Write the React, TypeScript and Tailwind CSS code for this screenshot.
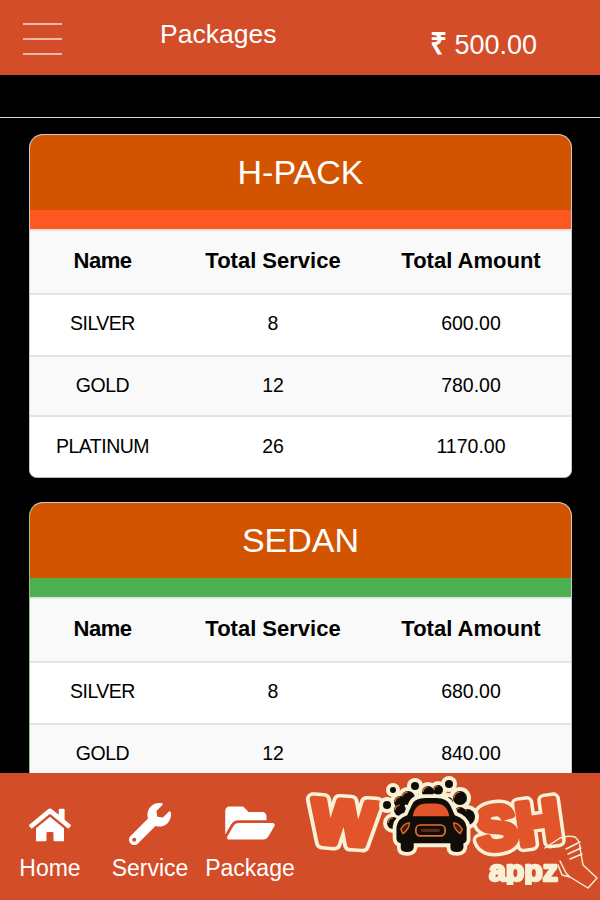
import { FaHome, FaWrench, FaFolderOpen } from "react-icons/fa";

const packs = [
  {
    title: "H-PACK",
    stripe: "bg-[#ff5722]",
    edge: "border-l-[#c9c9c9]",
    rows: [
      ["SILVER", "8", "600.00"],
      ["GOLD", "12", "780.00"],
      ["PLATINUM", "26", "1170.00"],
    ],
  },
  {
    title: "SEDAN",
    stripe: "bg-[#4caf50]",
    edge: "border-l-[#8fbf7f]",
    rows: [
      ["SILVER", "8", "680.00"],
      ["GOLD", "12", "840.00"],
    ],
  },
];

// row heights differ by a pixel or two in the picture
const rowHeights = ["h-[62px] pb-[2px]", "h-[60px] pb-[1px]", "h-[62px]"];

function Row({ cells, className }: { cells: string[]; className: string }) {
  return (
    <div className={`grid grid-cols-[145px_196px_1fr] items-center border-t-2 border-[#e3e3e3] text-center ${className}`}>
      {cells.map((c, i) => (
        <div key={c} className={i === 0 ? "tracking-[-0.5px]" : ""}>
          {c}
        </div>
      ))}
    </div>
  );
}

function PackCard({ pack }: { pack: (typeof packs)[number] }) {
  return (
    <section className={`mb-[24px] overflow-hidden rounded-t-[14px] rounded-b-[8px] border border-[#c9c9c9] border-b-[#b5b5b5] bg-white text-black ${pack.edge}`}>
      <h2 className="flex h-[75px] items-center justify-center bg-[#d35400] pb-[1px] text-[34px] text-white">
        {pack.title}
      </h2>
      <div className={`h-[19px] ${pack.stripe}`} />
      <Row cells={["Name", "Total Service", "Total Amount"]} className="h-[64px] bg-[#f9f9f9] pb-[4px] text-[22px] font-bold" />
      {pack.rows.map((r, i) => (
        <Row
          key={r[0]}
          cells={r}
          className={`text-[19.5px] ${rowHeights[i]} ${i === 1 ? "bg-[#f9f9f9]" : "bg-white"}`}
        />
      ))}
    </section>
  );
}

const bubbles = [
  [93, 17, 3],
  [115, 13, 4],
  [149, 11, 4],
  [87, 32, 4],
  [108, 25, 7],
  [128, 19, 6],
  [138, 17, 5],
  [160, 25, 7],
  [100, 29, 6],
  [100, 37, 6],
  [148, 29, 5],
  [167, 44, 8],
  [160, 40, 6],
  [93, 50, 6],
];

function Logo() {
  const carBody =
    "M113 34 Q115 27 126 27 L136 27 Q146 27 149 34 L153 43 Q163 46 164 54 L164 66 Q163 69 161 69 L161 73 Q160 77 155 77 Q149 77 149 73 L149 69 L115 69 L115 73 Q114 77 109 77 Q103 77 103 73 L103 69 Q99 68 99 64 L99 54 Q100 46 109 43 Z";
  return (
    <svg viewBox="0 0 300 127" className="h-[127px] w-[300px] blur-[0.4px]">
      <g fontFamily="'Liberation Sans', sans-serif" fontWeight="700" strokeLinejoin="round">
        <g fill="#f8f1d6" stroke="#f8f1d6" strokeWidth="14">
          <text x="12" y="71" fontSize="62" transform="rotate(4 44 50)" textLength="64" lengthAdjust="spacingAndGlyphs">W</text>
          <text x="176" y="73" fontSize="60" transform="rotate(-8 216 50)" textLength="84" lengthAdjust="spacingAndGlyphs">SH</text>
        </g>
        <g fill="#e2552a" stroke="#e2552a" strokeWidth="7">
          <text x="12" y="71" fontSize="62" transform="rotate(4 44 50)" textLength="64" lengthAdjust="spacingAndGlyphs">W</text>
          <text x="176" y="73" fontSize="60" transform="rotate(-8 216 50)" textLength="84" lengthAdjust="spacingAndGlyphs">SH</text>
        </g>
      </g>

      {/* cream halo behind the bubbles and the car */}
      <g fill="#f8f1d6">
        {bubbles.map(([x, y, r]) => (
          <circle key={`${x}-${y}`} cx={x} cy={y} r={r + 4} />
        ))}
      </g>
      {bubbles.map(([x, y, r]) => (
        <g key={`${x}-${y}`}>
          <circle cx={x} cy={y} r={r} fill="#120c08" />
          {r > 4 && (
            <path
              d={`M${x - r + 1} ${y} A${r - 1} ${r - 1} 0 0 1 ${x} ${y - r + 1}`}
              fill="none"
              stroke="#e2712f"
              strokeWidth="1.2"
            />
          )}
        </g>
      ))}

      <g transform="translate(131 52) scale(1.08) translate(-131 -52)">
        <path d={carBody} fill="#f8f1d6" stroke="#f8f1d6" strokeWidth="7" strokeLinejoin="round" />
        <path d={carBody} fill="#120c08" />
        <path d="M114 44 Q116 32 127 32 L135 32 Q146 32 148 44 Z" fill="#e2552a" />
        <rect x="117" y="52" width="27" height="10" rx="4" fill="none" stroke="#e2712f" strokeWidth="1.6" />
        <rect x="122" y="55.5" width="17" height="3" fill="#5c2a14" />
        <path d="M103 56 Q106 50 111 50 Q111 56 105 60 Z" fill="#4a1e0e" stroke="#e2712f" strokeWidth="1.2" />
        <path d="M160 56 Q157 50 152 50 Q152 56 158 60 Z" fill="#4a1e0e" stroke="#e2712f" strokeWidth="1.2" />
      </g>

      <defs>
        <clipPath id="appz-clip">
          <rect x="180" y="84" width="84" height="28" />
        </clipPath>
      </defs>
      <g clipPath="url(#appz-clip)">
        <text
          x="189"
          y="108"
          fontFamily="'Liberation Sans', sans-serif"
          fontWeight="700"
          fontSize="29"
          fill="#f8f1d6"
          stroke="#f8f1d6"
          strokeWidth="2.5"
          strokeLinejoin="round"
          textLength="69"
          lengthAdjust="spacingAndGlyphs"
        >
          appz
        </text>
      </g>

      {/* hand */}
      <path
        d="M245 75 L260 65 Q268 62 275 64 Q280 68 280 75 L283 92 L297 105 L288 115 L270 104 L262 102 L258 92 M266 76 L280 69 M268 81 L281 75 M270 86 L282 81 M260 88 L266 100 L270 104"
        fill="none"
        stroke="#f8f1d6"
        strokeWidth="1.4"
        strokeLinejoin="round"
        strokeLinecap="round"
      />
    </svg>
  );
}

export default function App() {
  const tabs = [
    { label: "Home", Icon: FaHome, size: "h-[38px] w-[42px] mt-[1px]" },
    { label: "Service", Icon: FaWrench, size: "h-[42px] w-[42px] -mt-[1px]" },
    { label: "Package", Icon: FaFolderOpen, size: "h-[44px] w-[50px] -mt-[2px]" },
  ];

  return (
    <div className="flex h-[900px] w-[600px] flex-col overflow-hidden bg-black font-['Liberation_Sans',sans-serif] text-white">
      <header className="flex h-[75px] shrink-0 bg-[#d34d29]">
        <div className="ml-[23px] mt-[23px] flex h-[32px] w-[39px] flex-col justify-between">
          <span className="h-[2px] bg-[#eeb9a6]" />
          <span className="h-[2px] bg-[#eeb9a6]" />
          <span className="h-[2px] bg-[#eeb9a6]" />
        </div>
        <div className="ml-[98px] mt-[17px] text-[26.5px] leading-[34px]">Packages</div>
        <div className="ml-auto mr-[63px] mt-[27px] flex items-baseline gap-[7px] text-[27px] leading-[34px]">
          <span className="text-[30px] font-bold">₹</span>
          <span>500.00</span>
        </div>
      </header>

      <div className="mt-[42px] h-[1px] shrink-0 bg-[#d8d8d8]" />

      <main className="min-h-0 flex-1 overflow-hidden px-[29px] pt-[16px]">
        <div className="w-[543px]">
          {packs.map((p) => (
            <PackCard key={p.title} pack={p} />
          ))}
        </div>
      </main>

      <footer className="flex h-[127px] shrink-0 bg-[#d34d29]">
        {tabs.map(({ label, Icon, size }) => (
          <div key={label} className="flex w-[100px] flex-col items-center pt-[31px]">
            <div className="flex h-[40px] items-center">
              <Icon className={size} />
            </div>
            <span className="mt-[10px] text-[23px] leading-[28px]">{label}</span>
          </div>
        ))}
        <Logo />
      </footer>
    </div>
  );
}
